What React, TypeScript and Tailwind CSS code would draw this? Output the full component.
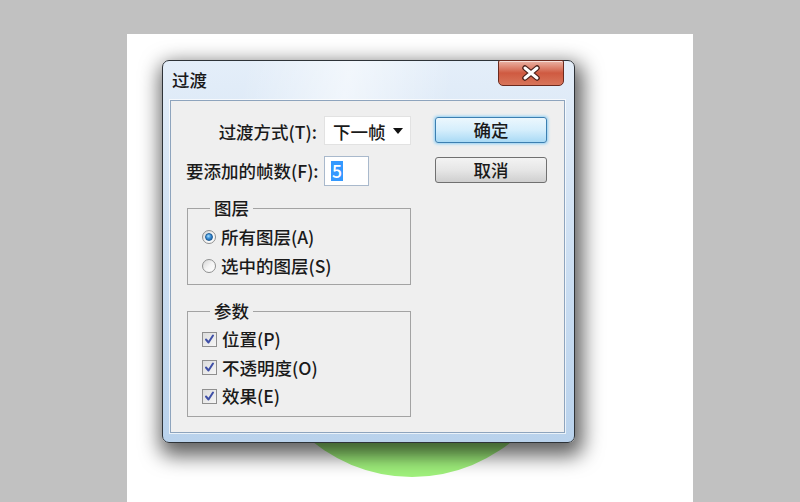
const font = { fontFamily: '"Noto Sans CJK SC", "Noto Sans", sans-serif' };

const Radio = ({ checked }: { checked: boolean }) => (
  <span className="w-[14px] h-[14px] rounded-full border border-[#8e8f8f] bg-gradient-to-br from-[#d4d4d4] via-[#f4f4f4] to-[#ffffff] flex items-center justify-center shrink-0">
    {checked && (
      <span className="w-[8px] h-[8px] rounded-full bg-[radial-gradient(circle_at_40%_35%,#a6e0ff_0%,#3b8ed6_45%,#14508f_100%)] border border-[#1d5c96]" />
    )}
  </span>
);

const Check = () => (
  <span className="w-[15px] h-[15px] border border-[#8f8f8f] bg-gradient-to-br from-[#dcdcdc] to-[#f6f6f6] flex items-center justify-center shrink-0">
    <svg width="11" height="11" viewBox="0 0 11 11">
      <path d="M2 5.5 L4.5 8.5 L9 1.5" fill="none" stroke="#3e4fa6" strokeWidth="2" strokeLinecap="round" strokeLinejoin="round" />
    </svg>
  </span>
);

const Group = ({ title, children, className }: { title: string; children: React.ReactNode; className?: string }) => (
  <fieldset className={`ml-[1px] w-[224px] border border-[#a3a3a3] px-0 ${className ?? ""}`}>
    <legend className="ml-[22px] px-[4px] text-[17.5px] leading-[20px] font-medium text-[#1a1a1a]">{title}</legend>
    {children}
  </fieldset>
);

const Row = ({ children }: { children: React.ReactNode }) => (
  <div className="h-[28.5px] flex items-center gap-[5px] pl-[14px] text-[17.5px] leading-[20px] font-medium text-[#1a1a1a]">{children}</div>
);

export default function App() {
  return (
    <div className="w-[800px] h-[502px] bg-[#c1c1c1] pt-[34px] pl-[127px] overflow-hidden" style={font}>
      <div className="relative w-[566px] h-[468px] bg-white">
        {/* green shape on the canvas */}
        <div className="absolute left-[127px] top-[127px] w-[316px] h-[316px] rounded-full bg-[#a0f17c]" />

        {/* dialog window */}
        <div className="absolute left-[35px] top-[26px] w-[413px] h-[383px] rounded-[7px] border border-[#2e3338] bg-gradient-to-b from-[#e4eef9] via-[#cddff2] to-[#b9d2ec] shadow-[3px_8px_20px_5px_rgba(0,0,0,0.62)] flex flex-col">
          <div className="h-[39px] flex items-start pl-[9px] bg-[linear-gradient(100deg,rgba(255,255,255,0)_20%,rgba(255,255,255,0.55)_45%,rgba(255,255,255,0)_70%)] rounded-t-[6px]">
            <span className="mt-[9px] text-[17.5px] leading-[20px] font-medium text-[#1a1a1a]">过渡</span>
            <div className="ml-auto mr-[10px] -mt-[1px] w-[66px] h-[26px] rounded-b-[5px] rounded-t-[2px] border border-[#6b2a1e] bg-gradient-to-b from-[#eab3a5] via-[#cf5a41] to-[#d8755a] shadow-[inset_0_1px_0_rgba(255,255,255,0.6)] flex items-center justify-center">
              <svg width="22" height="16" viewBox="0 0 22 16">
                <path d="M5 3 L17 13 M17 3 L5 13" stroke="#4a2019" strokeWidth="5.5" strokeLinecap="round" />
                <path d="M5 3 L17 13 M17 3 L5 13" stroke="#ffffff" strokeWidth="3" strokeLinecap="round" />
              </svg>
            </div>
          </div>

          {/* client area */}
          <div className="flex-1 ml-[7px] mr-[9px] mb-[9px] border border-[#8ea4bd] bg-[#efefef] shadow-[0_0_0_1px_rgba(255,255,255,0.7)] flex pl-[15px] pt-[15px]">
            <div className="w-[225px] flex flex-col">
              <div className="h-[29px] flex items-center text-[17.5px] leading-[20px] font-medium text-[#1a1a1a]">
                <span className="w-[138px] text-right pr-[7px] pt-[3px] whitespace-nowrap">过渡方式(T):</span>
                <div className="w-[87px] h-[29px] bg-white border border-[#e2e2e2] flex items-center pl-[8px] pr-[7px]">
                  <span className="pt-[3px]">下一帧</span>
                  <svg className="ml-auto" width="10" height="6" viewBox="0 0 10 6">
                    <path d="M0 0 H10 L5 6 Z" fill="#111" />
                  </svg>
                </div>
              </div>
              <div className="mt-[11px] h-[30px] flex items-center text-[17.5px] leading-[20px] font-medium text-[#1a1a1a]">
                <span className="w-[138px] text-right pr-[7px] whitespace-nowrap">要添加的帧数(F):</span>
                <div className="w-[45px] h-[30px] bg-white border border-[#a9b9cc] flex items-center pl-[6px]">
                  <span className="bg-[#3399ff] text-white px-[1px] leading-[20px]">5</span>
                </div>
              </div>

              <Group title="图层" className="mt-[12px] pt-[5px] pb-[4px]">
                <Row>
                  <Radio checked />
                  <span>所有图层(A)</span>
                </Row>
                <Row>
                  <Radio checked={false} />
                  <span>选中的图层(S)</span>
                </Row>
              </Group>

              <Group title="参数" className="mt-[16px] pt-[4px] pb-[5px]">
                <Row>
                  <Check />
                  <span>位置(P)</span>
                </Row>
                <Row>
                  <Check />
                  <span>不透明度(O)</span>
                </Row>
                <Row>
                  <Check />
                  <span>效果(E)</span>
                </Row>
              </Group>
            </div>

            <div className="ml-[24px] flex flex-col pt-[1px]">
              <button className="w-[112px] h-[26px] rounded-[3px] border border-[#3c7fb1] bg-gradient-to-b from-[#ecf7fd] via-[#d5eefc] to-[#a9daf5] shadow-[0_0_3px_1px_#8fd0f5] text-[17.5px] leading-[20px] font-medium text-[#1a1a1a]">
                确定
              </button>
              <button className="mt-[14px] w-[112px] h-[26px] rounded-[3px] border border-[#707070] bg-gradient-to-b from-[#f3f3f3] via-[#e6e6e6] to-[#cfcfcf] text-[17.5px] leading-[20px] font-medium text-[#1a1a1a]">
                取消
              </button>
            </div>
          </div>
        </div>
      </div>
    </div>
  );
}
